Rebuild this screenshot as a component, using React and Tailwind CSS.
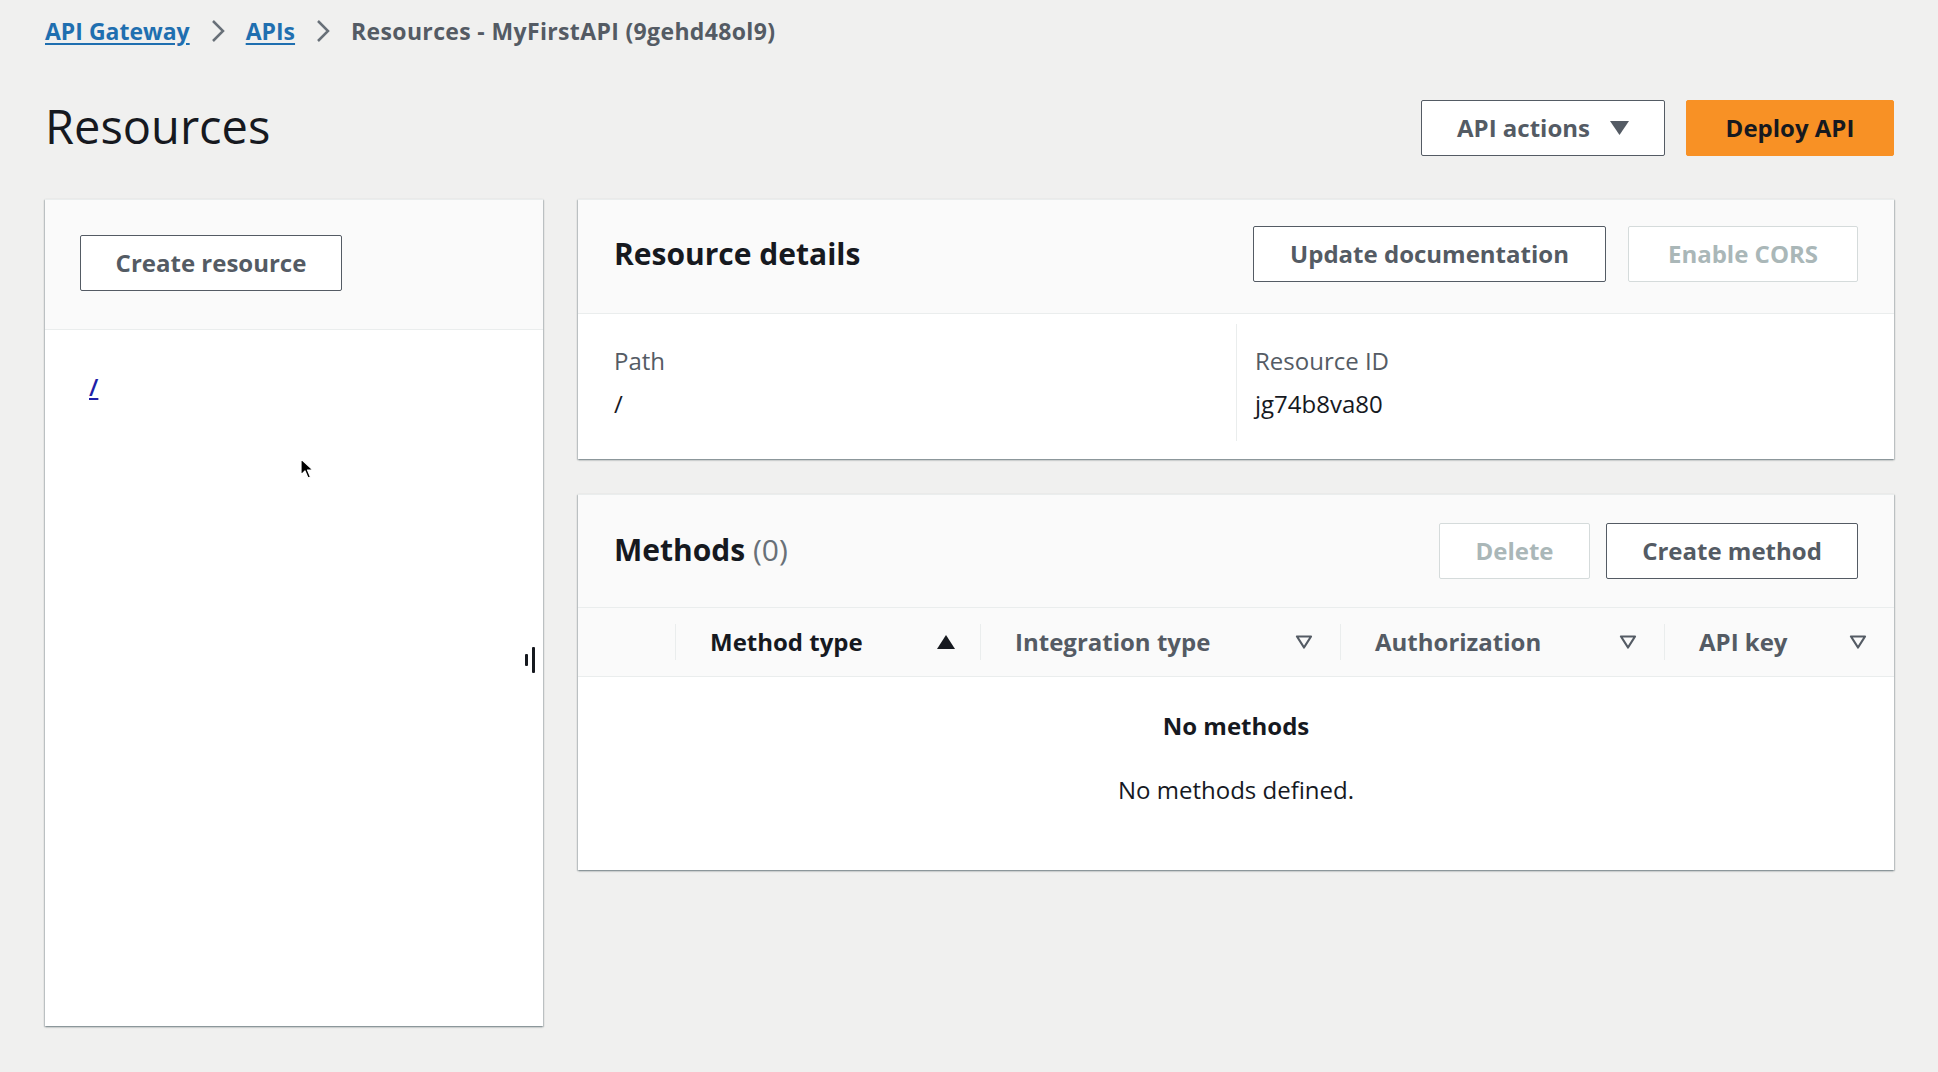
import React from "react";

const shadow =
  "shadow-[0_1px_2px_0_rgba(0,28,36,0.35),1px_1px_1px_0_rgba(0,28,36,0.12),-1px_1px_1px_0_rgba(0,28,36,0.12)]";

function Chevron() {
  return (
    <svg width="14" height="24" viewBox="0 0 14 24" className="mx-[21px]">
      <polyline points="2,2 12,12 2,22" fill="none" stroke="#687078" strokeWidth="2.5" />
    </svg>
  );
}

function DownFilled({ color = "#545b64" }) {
  return (
    <svg width="19" height="14" viewBox="0 0 19 14">
      <polygon points="0,0 19,0 9.5,14" fill={color} />
    </svg>
  );
}

function UpFilled() {
  return (
    <svg width="18" height="14" viewBox="0 0 18 14">
      <polygon points="9,0 18,14 0,14" fill="#16191f" />
    </svg>
  );
}

function DownOutline() {
  return (
    <svg width="18" height="14" viewBox="0 0 18 14">
      <polygon points="2,1.5 16,1.5 9,12.5" fill="none" stroke="#545b64" strokeWidth="2.2" strokeLinejoin="round" />
    </svg>
  );
}

function Btn({ children, w, disabled, primary }) {
  const base = "h-[56px] rounded-[2px] flex items-center justify-center text-[24px] font-bold leading-none";
  if (primary)
    return <button className={`${base} ${w} bg-[#f89125] text-[#16191f] border border-[#f89125]`}>{children}</button>;
  if (disabled)
    return <button className={`${base} ${w} bg-white text-[#aab7b8] border border-[#d5dbdb]`}>{children}</button>;
  return <button className={`${base} ${w} bg-white text-[#545b64] border border-[#545b64]`}>{children}</button>;
}

function HeadCell({ label, active, first }) {
  return (
    <div className="flex items-center h-full">
      <div className="w-px h-[36px] bg-[#eaeded]" />
      <div className={`flex-1 flex items-center justify-between pl-[34px] ${first ? "pr-[25px]" : "pr-[27px]"}`}>
        <span className={`text-[24px] font-bold ${active ? "text-[#16191f]" : "text-[#545b64]"}`}>{label}</span>
        {active ? <UpFilled /> : <DownOutline />}
      </div>
    </div>
  );
}

export default function App() {
  return (
    <div className="min-h-screen bg-[#f0f0ef] pl-[45px] pr-[44px] pt-[14px] font-['Open_Sans',sans-serif] text-[#16191f]">
      <nav className="flex items-center h-[34px] text-[23px] font-bold leading-[34px]">
        <a className="text-[#1f6fb0] underline underline-offset-[3px]">API Gateway</a>
        <Chevron />
        <a className="text-[#1f6fb0] underline underline-offset-[3px]">APIs</a>
        <Chevron />
        <span className="text-[#545b64] tracking-[0.35px]">Resources - MyFirstAPI (9gehd48ol9)</span>
      </nav>

      <div className="mt-[52px] h-[56px] flex items-center justify-between">
        <h1 className="text-[47px] font-normal leading-none text-[#16191f] -mt-[4px]">Resources</h1>
        <div className="flex items-center gap-[21px]">
          <Btn w="w-[244px]">
            <span className="mr-[20px]">API actions</span>
            <DownFilled />
          </Btn>
          <Btn w="w-[208px]" primary>Deploy API</Btn>
        </div>
      </div>

      <div className="mt-[43px] flex items-start gap-[35px]">
        <div className={`relative w-[498px] h-[827px] bg-white ${shadow} border-t border-[#eaeded] flex flex-col`}>
          <div className="h-[130px] bg-[#fafafa] border-b border-[#eaeded] flex items-start pt-[35px] px-[35px]">
            <Btn w="w-[262px]">Create resource</Btn>
          </div>
          <div className="pl-[44px] pt-[42px]">
            <a className="text-[24px] leading-[30px] font-semibold text-[#1f1fa8] underline underline-offset-[2px]">/</a>
          </div>
          <div className="absolute right-[8px] top-[447px] flex items-center gap-[4px]">
            <div className="w-[3px] h-[12px] bg-[#16191f] rounded-[1px]" />
            <div className="w-[3px] h-[26px] bg-[#16191f] rounded-[1px]" />
          </div>
          <svg className="absolute left-[255px] top-[258px]" width="14" height="22" viewBox="0 0 14 22">
            <path d="M1 1 L1 17 L5 13 L8 20 L10.5 19 L7.5 12 L13 12 Z" fill="#000" stroke="#fff" strokeWidth="1.2" strokeLinejoin="round" />
          </svg>
        </div>

        <div className="flex-1 flex flex-col gap-[35px]">
          <div className={`bg-white ${shadow} border-t border-[#eaeded]`}>
            <div className="h-[114px] bg-[#fafafa] border-b border-[#eaeded] flex items-start pt-[26px] justify-between px-[36px]">
              <h2 className="h-[56px] flex items-center text-[30px] font-bold leading-none text-[#16191f]">Resource details</h2>
              <div className="flex items-center gap-[22px]">
                <Btn w="w-[353px]">Update documentation</Btn>
                <Btn w="w-[230px]" disabled>Enable CORS</Btn>
              </div>
            </div>
            <div className="px-[36px] pt-[10px] pb-[18px] grid grid-cols-2 text-[24px] leading-[30px]">
              <div className="py-[22px]">
                <div className="text-[#545b64]">Path</div>
                <div className="mt-[13px] text-[#16191f]">/</div>
              </div>
              <div className="py-[22px] pl-[18px] border-l border-[#eaeded]">
                <div className="text-[#545b64]">Resource ID</div>
                <div className="mt-[13px] text-[#16191f]">jg74b8va80</div>
              </div>
            </div>
          </div>

          <div className={`bg-white ${shadow} border-t border-[#eaeded]`}>
            <div className="h-[113px] bg-[#fafafa] border-b border-[#eaeded] flex items-center justify-between px-[36px]">
              <h2 className="text-[30px] font-bold leading-none text-[#16191f] -mt-[2px]">
                Methods <span className="font-normal text-[#687078]">(0)</span>
              </h2>
              <div className="flex items-center gap-[16px]">
                <Btn w="w-[151px]" disabled>Delete</Btn>
                <Btn w="w-[252px]">Create method</Btn>
              </div>
            </div>
            <div className="h-[69px] bg-[#fafafa] border-b border-[#eaeded] grid grid-cols-[97px_305px_360px_324px_1fr]">
              <div />
              <HeadCell label="Method type" active first />
              <HeadCell label="Integration type" />
              <HeadCell label="Authorization" />
              <HeadCell label="API key" />
            </div>
            <div className="text-center pt-[34px] pb-[65px] text-[24px] leading-[30px] text-[#16191f]">
              <div className="font-bold">No methods</div>
              <div className="mt-[34px]">No methods defined.</div>
            </div>
          </div>
        </div>
      </div>
    </div>
  );
}
